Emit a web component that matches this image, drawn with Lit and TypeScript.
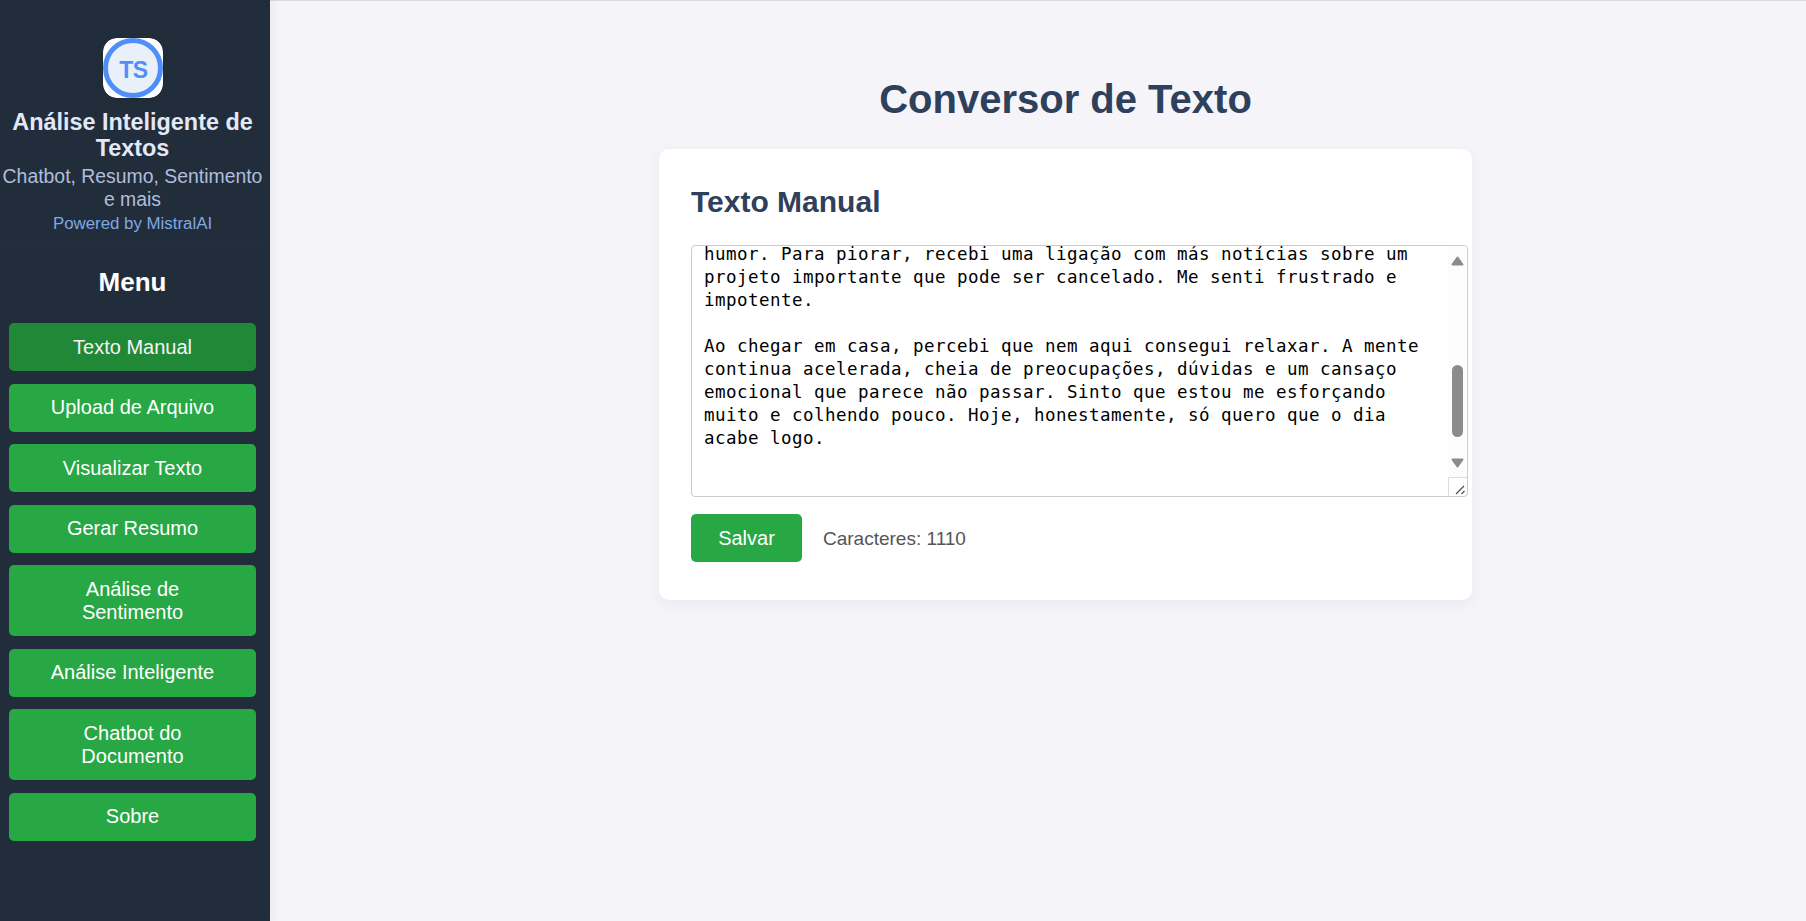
import { LitElement, html, css } from "lit";
import { customElement, property, state } from "lit/decorators.js";
import { classMap } from "lit/directives/class-map.js";

const MENU = [
  "Texto Manual",
  "Upload de Arquivo",
  "Visualizar Texto",
  "Gerar Resumo",
  "Análise de Sentimento",
  "Análise Inteligente",
  "Chatbot do Documento",
  "Sobre",
];

const LINES = [
  "humor. Para piorar, recebi uma ligação com más notícias sobre um",
  "projeto importante que pode ser cancelado. Me senti frustrado e",
  "impotente.",
  "",
  "Ao chegar em casa, percebi que nem aqui consegui relaxar. A mente",
  "continua acelerada, cheia de preocupações, dúvidas e um cansaço",
  "emocional que parece não passar. Sinto que estou me esforçando",
  "muito e colhendo pouco. Hoje, honestamente, só quero que o dia",
  "acabe logo.",
];

@customElement("side-bar")
class SideBar extends LitElement {
  static styles = css`
    :host {
      display: block;
      box-sizing: border-box;
      width: 270px;
      flex: none;
      background: #222d3b;
      box-shadow: 2px 0 10px rgba(0, 0, 0, 0.06);
      position: relative;
      text-align: center;
    }
    .brand {
      height: 245px;
      box-sizing: border-box;
      padding: 38px 5px 0 0;
      border-bottom: 1px solid #25303e;
    }
    .logo {
      display: block;
      width: 60px;
      height: 60px;
      margin: 0 auto 11px;
      border-radius: 14px;
      box-shadow: 0 2px 8px rgba(0, 0, 0, 0.08);
    }
    .name {
      font-size: 23.4px;
      line-height: 26px;
      font-weight: 700;
      color: #e3e8f7;
      margin-bottom: 4px;
    }
    .tag {
      font-size: 19.4px;
      line-height: 23px;
      color: #b0bedb;
      white-space: nowrap;
      margin-bottom: 3px;
    }
    .power {
      font-size: 16.85px;
      line-height: 20px;
      color: #7ea9e1;
    }
    .heading {
      margin: 22px 5px 0 0;
      font-size: 26px;
      line-height: 30px;
      font-weight: 700;
      color: #fff;
    }
    .menu {
      display: flex;
      flex-direction: column;
      gap: 12.5px;
      margin: 26px 14px 0 9px;
    }
    .item {
      font: 20px/23px "Liberation Sans", Arial, sans-serif;
      color: #fff;
      background: #28a745;
      border: 0;
      border-radius: 5px;
      padding: 12.5px 25px;
      white-space: pre-line;
    }
    .active {
      background: #218838;
      color: #f4f4f4;
    }
  `;

  @state() selected = 0;

  render() {
    return html`
      <div class="brand">
        <svg class="logo" viewBox="0 0 60 60">
          <rect width="60" height="60" rx="14" fill="#fff" />
          <circle cx="30" cy="30" r="27.5" fill="#eaf0fa" stroke="#4f8ff7" stroke-width="5" />
          <text x="30.3" y="40" text-anchor="middle" font-family="Liberation Sans, Arial, sans-serif"
            font-size="23" font-weight="700" letter-spacing="-0.6" fill="#4f8ff7">TS</text>
        </svg>
        <div class="name">Análise Inteligente de<br />Textos</div>
        <div class="tag">Chatbot, Resumo, Sentimento<br />e mais</div>
        <div class="power">Powered by MistralAI</div>
      </div>
      <div class="heading">Menu</div>
      <div class="menu">
        ${MENU.map(
          (m, i) => html`<button
            class=${classMap({ item: true, active: i === this.selected })}
            @click=${() => (this.selected = i)}
          >${m}</button>`
        )}
      </div>
    `;
  }
}

@customElement("text-box")
class TextBox extends LitElement {
  static styles = css`
    :host {
      display: flex;
      box-sizing: border-box;
      width: 777px;
      height: 252px;
      border: 1px solid #ccc;
      border-radius: 4px;
      background: #fff;
      overflow: hidden;
    }
    .text {
      flex: 1;
      margin: -3px 0 0;
      padding-left: 12px;
      font: 17.5px/23px "DejaVu Sans Mono", monospace;
      letter-spacing: 0.463px;
      color: #000;
      white-space: pre;
    }
    .side {
      width: 19px;
      display: flex;
      flex-direction: column;
    }
    .bar {
      display: block;
      flex: 1;
      background: #fcfcfc;
    }
    .grip {
      display: block;
      width: 19px;
      height: 19px;
    }
  `;

  @property({ attribute: false }) lines: string[] = [];

  render() {
    return html`
      <div class="text">${this.lines.join("\n")}</div>
      <div class="side">
        <svg class="bar" viewBox="0 0 19 231" width="19" height="231">
          <path d="M9.5 11.5 L14.5 18.5 H4.5 Z" fill="#8b8b8b" stroke="#8b8b8b" stroke-width="2" stroke-linejoin="round" />
          <rect x="4" y="119" width="11" height="72" rx="5.5" fill="#8b8b8b" />
          <path d="M9.5 220.5 L14.5 213.5 H4.5 Z" fill="#8b8b8b" stroke="#8b8b8b" stroke-width="2" stroke-linejoin="round" />
        </svg>
        <svg class="grip" viewBox="0 0 19 19">
          <path d="M0.5 19 V0.5 H19" fill="none" stroke="#dcdcdc" />
          <path d="M8 17 L16 9 M13.5 17 L16.5 14" fill="none" stroke="#505050" stroke-width="1.3" />
        </svg>
      </div>
    `;
  }
}

@customElement("app-root")
class AppRoot extends LitElement {
  static styles = css`
    :host {
      display: flex;
      height: 921px;
      overflow: hidden;
      background: #f4f4f9;
      font-family: "Liberation Sans", Arial, sans-serif;
    }
    .main {
      flex: 1;
      box-sizing: border-box;
      border-top: 1px solid #d9d9de;
      padding-left: 55px;
      display: flex;
      flex-direction: column;
      align-items: center;
    }
    .title {
      margin: 75px 0 27px;
      font-size: 40px;
      line-height: 46px;
      font-weight: 700;
      color: #2e405b;
    }
    .card {
      box-sizing: border-box;
      width: 813px;
      height: 451px;
      padding: 36px 0 0 32px;
      border-radius: 10px;
      background: #fff;
      box-shadow: 0 4px 15px rgba(0, 0, 0, 0.05);
    }
    .subtitle {
      margin: 0 0 26px;
      font-size: 30px;
      line-height: 34px;
      font-weight: 700;
      color: #2e405b;
    }
    .actions {
      display: flex;
      align-items: center;
      gap: 21px;
      margin-top: 17px;
    }
    .save {
      width: 111px;
      height: 48px;
      padding: 0;
      border: 0;
      border-radius: 5px;
      background: #28a745;
      color: #fff;
      font: 20px/23px "Liberation Sans", Arial, sans-serif;
    }
    .count {
      font-size: 19px;
      line-height: 22px;
      padding-top: 1px;
      color: #555;
    }
  `;

  render() {
    return html`
      <side-bar></side-bar>
      <div class="main">
        <h1 class="title">Conversor de Texto</h1>
        <div class="card">
          <h2 class="subtitle">Texto Manual</h2>
          <text-box .lines=${LINES}></text-box>
          <div class="actions">
            <button class="save">Salvar</button>
            <span class="count">Caracteres: 1110</span>
          </div>
        </div>
      </div>
    `;
  }
}
